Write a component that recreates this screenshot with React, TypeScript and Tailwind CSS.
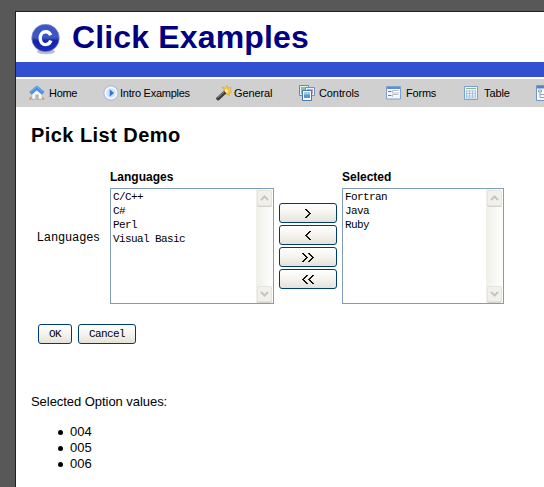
import type { ReactNode } from "react";

function Logo() {
  return (
    <svg width="30" height="33" viewBox="0 0 30 33" className="shrink-0">
      <defs>
        <linearGradient id="ball" x1="0" y1="0" x2="0" y2="1">
          <stop offset="0" stopColor="#3c54c8" />
          <stop offset=".48" stopColor="#3e58c4" />
          <stop offset=".6" stopColor="#1524a4" />
          <stop offset="1" stopColor="#1a2cc0" />
        </linearGradient>
      </defs>
      <ellipse cx="15" cy="27.600" rx="9" ry="2.600" fill="#b9bfc8" />
      <circle cx="14.500" cy="14" r="13.800" fill="url(#ball)" stroke="#8d9ac4" strokeWidth=".7" />
      <path d="M19.600 11.300C18.800 8.900 17 7.700 14.700 7.700C11.300 7.700 9.200 10.300 9.200 14.200S11.300 20.600 14.700 20.600C17.200 20.600 19 19.200 19.800 16.600" fill="none" stroke="#fff" strokeWidth="3.400" />
    </svg>
  );
}

function HomeIcon() {
  return (
    <svg width="16" height="16" viewBox="0 0 16 16">
      <path d="M0 14h16M1 12.500h3M12 12.500h3" stroke="#d39a54" strokeWidth="1.400" strokeDasharray="2 .6" />
      <path d="M3 8L8 4l5 4v6H3z" fill="#f4f6fa" stroke="#b9c2d0" strokeWidth=".6" />
      <path d="M6.300 14V9.500h3.400V14z" fill="#b9b6a8" />
      <path d="M1.500 8.300L7.700 2.800 14.200 8.300" fill="none" stroke="#4a8fe0" strokeWidth="3.800" strokeLinejoin="round" />
      <path d="M2 6.800L7.700 1.700 13.600 6.800" fill="none" stroke="#79b5f4" strokeWidth="1" />
    </svg>
  );
}

function PlayIcon() {
  return (
    <svg width="16" height="16" viewBox="0 0 16 16">
      <circle cx="8" cy="8" r="7.200" fill="#eaf2fc" stroke="#9fb9dc" />
      <circle cx="8" cy="8" r="5.400" fill="#d3e4f8" stroke="#fff" strokeWidth="1" />
      <path d="M6.700 4.200L11 8l-4.300 3.800z" fill="#3476cc" />
    </svg>
  );
}

function WandIcon() {
  return (
    <svg width="16" height="16" viewBox="0 0 16 16">
      <path d="M6 2l3.300 1.300L11 .5l1 2.700 3-.7-1 2.700 1.700 1.800-2.500 1 .3 2.600-2.600-1.300L8.500 9.600 8.500 6z" fill="#f7c94d" stroke="#dfa32c" strokeWidth=".7" />
      <path d="M2 13.600L8.600 7.500" stroke="#3d3d3d" strokeWidth="3.600" strokeLinecap="round" />
      <path d="M1.500 12.800L8 6.800" stroke="#a0a0a0" strokeWidth="1" />
      <path d="M9.200 7L11.200 5" stroke="#fff3b5" strokeWidth="2.600" />
    </svg>
  );
}

function ControlsIcon() {
  return (
    <svg width="16" height="16" viewBox="0 0 16 16">
      <path d="M.5 .5h9v10h-9z" fill="#e8f1f8" stroke="#5c8ab6" />
      <path d="M2 2h6v7H2z" fill="#8cc488" />
      <path d="M6.500 2.500h9v8h-9z" fill="#edf3fa" stroke="#6a94c0" />
      <path d="M8 4h6v5H8z" fill="#d49cb4" />
      <path d="M3.500 5.500h9v10h-9z" fill="#f4f9fd" stroke="#4679ad" />
      <path d="M5 7h6v6H5z" fill="#5a98cc" />
      <path d="M5 7h6v2.500H5z" fill="#a4cde6" />
    </svg>
  );
}

function FormsIcon() {
  return (
    <svg width="15" height="14" viewBox="0 0 15 14">
      <path d="M.5 .5h14v12.500H.5z" fill="#f3f7fd" stroke="#7ba0cf" />
      <path d="M1 1h13v2H1z" fill="#5d91d3" />
      <path d="M2 5.500h3.500M2 9.500h3.500" stroke="#5a7fbd" />
      <path d="M13 4.500H6.500v2.500H13M12 8.500H6.500v2.500" fill="#fff" stroke="#b9c0ca" />
    </svg>
  );
}

function TableIcon() {
  return (
    <svg width="14" height="14" viewBox="0 0 14 14">
      <path d="M.5 .5h13v13H.5z" fill="#eef5fc" stroke="#77a3cf" />
      <path d="M2 2.500h10" stroke="#8eb58e" />
      <path d="M2 5h10M2 7.500h10M2 10h10M2 12h10M2.500 4.500V12M5.500 4.500V12M8.500 4.500V12M11.500 4.500V12" stroke="#98bce0" strokeWidth=".8" />
    </svg>
  );
}

function TreeIcon() {
  return (
    <svg width="16" height="16" viewBox="0 0 16 16" className="shrink-0">
      <path d="M.5 .5h15v15H.5z" fill="#f5f8fc" stroke="#7298c5" />
      <path d="M1 1h14v2.500H1z" fill="#5388c2" />
      <path d="M2.500 5h3v2h-3zM4 7v5.500h4M4 9.500h4" fill="none" stroke="#9aa4b0" />
    </svg>
  );
}

function NavItem({ icon, label, className }: { icon: ReactNode; label: string; className: string }) {
  return (
    <div className={`flex shrink-0 items-center text-[11px] whitespace-nowrap ${className}`}>
      {icon}
      <span>{label}</span>
    </div>
  );
}

function ScrollButton({ down = false }: { down?: boolean }) {
  return (
    <div className="flex h-4 w-[15px] items-center justify-center rounded-[2px] border border-[#e4e3dc] bg-[#f1f0ea] shadow-[0_1px_0_#d5d4cc]">
      <svg width="9" height="6" viewBox="0 0 9 6">
        <path d={down ? "M1 1l3.500 3.500L8 1" : "M1 5l3.500-3.500L8 5"} fill="none" stroke="#c7c6bd" strokeWidth="2" />
      </svg>
    </div>
  );
}

function PickBox({ title, items, width }: { title: string; items: string[]; width: string }) {
  return (
    <div className={`shrink-0 ${width}`}>
      <div className="h-[19px] text-[12px] leading-[16px] font-bold">{title}</div>
      <div className="flex h-[116px] justify-between border border-[#7f9db9] bg-white">
        <ul className="pt-px pl-[2px] font-['Liberation_Mono',monospace] text-[11px] leading-[14px] tracking-[-0.6px] whitespace-pre">
          {items.map((item) => (
            <li key={item}>{item}</li>
          ))}
        </ul>
        <div className="flex w-[17px] flex-col items-center justify-between bg-linear-to-r from-[#f0f0e9] to-[#fefefc] py-px">
          <ScrollButton />
          <ScrollButton down />
        </div>
      </div>
    </div>
  );
}

function XpButton({ children, className }: { children: ReactNode; className: string }) {
  return (
    <button
      className={`flex h-5 items-center justify-center rounded-[3px] border border-[#003c74] bg-linear-to-b from-white via-[#f4f3ee] to-[#e5e2d8] font-['Liberation_Mono',monospace] text-[11px] leading-none tracking-[-0.6px] ${className}`}
    >
      {children}
    </button>
  );
}

function Chevrons({ left = false, double = false }: { left?: boolean; double?: boolean }) {
  return (
    <svg
      width={double ? 12 : 6}
      height="9"
      viewBox={double ? "0 0 12 9" : "0 0 6 9"}
      shapeRendering="crispEdges"
      className={left ? "-scale-x-100" : ""}
    >
      <path d={double ? "M.5 0l4.500 4.500L.5 9M6.500 0L11 4.500 6.500 9" : "M.5 0L5 4.500.5 9"} fill="none" stroke="#111" />
    </svg>
  );
}

export default function App() {
  return (
    <div className="h-[487px] w-[544px] overflow-hidden bg-[#585858] pt-[11px] pl-[15px] font-['Liberation_Sans',Arial,sans-serif] text-black">
      <div className="h-[476px] overflow-hidden border-t border-l border-[#202020] bg-white">
        <header className="flex h-[50px] pl-[15px]">
          <div className="pt-[12px]">
            <Logo />
          </div>
          <h1 className="pt-[7px] pl-[11px] text-[32px] leading-[36px] font-bold tracking-[0.15px] whitespace-nowrap text-[#000080]">
            Click Examples
          </h1>
        </header>
        <div className="h-[15px] bg-[#334fd1]" />
        <nav className="mt-[2px] flex h-[28px] items-center overflow-hidden bg-[#d0d0d0] pl-[13px]">
          <NavItem icon={<HomeIcon />} label="Home" className="w-[74px] gap-1 tracking-[-0.3px]" />
          <NavItem icon={<PlayIcon />} label="Intro Examples" className="w-[113px] gap-px tracking-[-0.25px]" />
          <NavItem icon={<WandIcon />} label="General" className="w-[83px] gap-[2px] tracking-[-0.1px]" />
          <NavItem icon={<ControlsIcon />} label="Controls" className="w-[87px] gap-1 tracking-[-0.1px]" />
          <NavItem icon={<FormsIcon />} label="Forms" className="w-[78px] gap-[5px] tracking-[-0.2px]" />
          <NavItem icon={<TableIcon />} label="Table" className="w-[72px] gap-[6px] tracking-[-0.1px]" />
          <TreeIcon />
        </nav>
        <main className="pl-[15px]">
          <h2 className="pt-[16px] text-[20px] leading-[24px] font-bold tracking-[0.45px]">Pick List Demo</h2>
          <div className="flex pt-[22px] pl-[6px]">
            <div className="w-[73px] shrink-0 pt-[60px] text-[12px] leading-[16px] tracking-[0.4px]">Languages</div>
            <PickBox title="Languages" items={["C/C++", "C#", "Perl", "Visual Basic"]} width="w-[164px]" />
            <div className="flex w-[68px] shrink-0 flex-col gap-[2px] px-[5px] pt-[34px]">
              <XpButton className="w-full"><Chevrons /></XpButton>
              <XpButton className="w-full"><Chevrons left /></XpButton>
              <XpButton className="w-full"><Chevrons double /></XpButton>
              <XpButton className="w-full"><Chevrons left double /></XpButton>
            </div>
            <PickBox title="Selected" items={["Fortran", "Java", "Ruby"]} width="w-[162px]" />
          </div>
          <div className="flex gap-[6px] pt-[20px] pl-[7px]">
            <XpButton className="w-[34px]">OK</XpButton>
            <XpButton className="w-[58px]">Cancel</XpButton>
          </div>
          <p className="pt-[50px] text-[13px] leading-[16px] tracking-[-0.05px]">Selected Option values:</p>
          <ul className="pt-[14px] pl-[27px] text-[13px] leading-[16px]">
            {["004", "005", "006"].map((value) => (
              <li key={value} className="flex items-center gap-[7px]">
                <span className="size-[5px] rounded-full bg-black" />
                {value}
              </li>
            ))}
          </ul>
        </main>
      </div>
    </div>
  );
}
